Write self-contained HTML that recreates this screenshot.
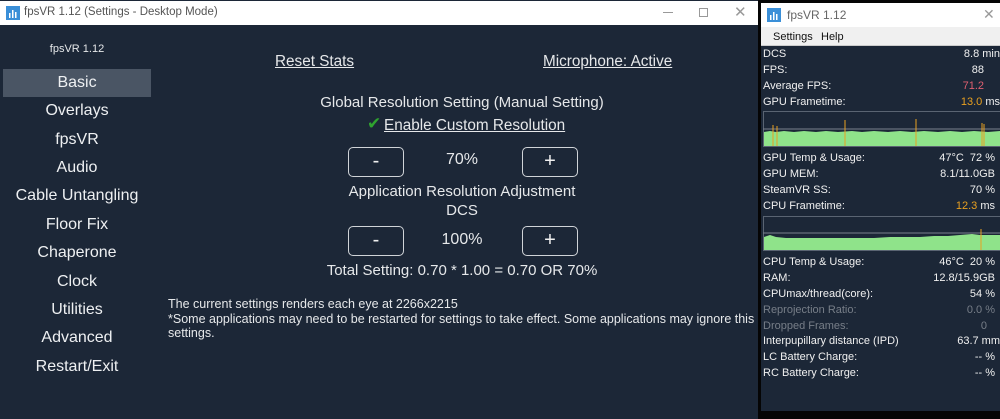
<!DOCTYPE html>
<html><head><meta charset="utf-8"><style>
*{margin:0;padding:0;box-sizing:border-box}
body{width:1000px;height:419px;background:#050505;position:relative;overflow:hidden;font-family:"Liberation Sans",sans-serif;color:#e6e8ea}
.a{position:absolute;white-space:nowrap}
#L{position:absolute;left:0;top:0;width:758px;height:419px;background:#1c2737}
#Lt{position:absolute;left:0;top:1px;width:758px;height:24px;background:#fff;color:#555;font-size:11.5px}
.nav{position:absolute;left:3px;width:148px;text-align:center;font-size:16px;color:#eef0f2}
.btn{position:absolute;width:56px;height:30px;border:1.5px solid #d0d4d8;border-radius:5px;text-align:center;font-size:20px;line-height:26px;color:#f0f0f0}
#R{position:absolute;left:761px;top:3px;width:239px;height:408px;background:#1c2737}
#Rt{position:absolute;left:0;top:0;width:239px;height:24px;background:#fff;color:#666;font-size:12px}
#Rm{position:absolute;left:0;top:24px;width:239px;height:19px;background:#f0f0f0;color:#111;font-size:11px;border-bottom:1px solid #ccc}
.r{position:absolute;left:2px;width:237px;font-size:11px;height:16px;color:#f0f0f0}
.r span{position:absolute;right:0;top:0}
.g{color:#777e88!important}
.o{color:#e8a020}
</style></head><body>
<div id="L">
 <div id="Lt">
  <svg class="a" style="left:6px;top:5px" width="14" height="14"><rect width="14" height="14" fill="#3a8fd8"/><rect x="3" y="7" width="1.5" height="5" fill="#fff"/><rect x="6" y="4" width="1.5" height="8" fill="#fff"/><rect x="9" y="6" width="1.5" height="6" fill="#fff"/></svg>
  <div class="a" style="left:24px;top:5px">fpsVR 1.12 (Settings - Desktop Mode)</div>
  <div class="a" style="left:663px;top:11px;width:10px;height:1px;background:#999"></div>
  <div class="a" style="left:699px;top:7px;width:9px;height:9px;border:1px solid #999"></div>
  <div class="a" style="left:734px;top:2px;font-size:15px;color:#999">✕</div>
 </div>
 <div class="a" style="left:3px;top:43px;width:148px;text-align:center;font-size:11px">fpsVR 1.12</div>
 <div class="a" style="left:3px;top:69px;width:148px;height:28px;background:#4a5564"></div>
 <div class="nav" style="top:74px">Basic</div>
 <div class="nav" style="top:102px">Overlays</div>
 <div class="nav" style="top:131px">fpsVR</div>
 <div class="nav" style="top:159px">Audio</div>
 <div class="nav" style="top:187px">Cable Untangling</div>
 <div class="nav" style="top:216px">Floor Fix</div>
 <div class="nav" style="top:244px">Chaperone</div>
 <div class="nav" style="top:273px">Clock</div>
 <div class="nav" style="top:301px">Utilities</div>
 <div class="nav" style="top:329px">Advanced</div>
 <div class="nav" style="top:358px">Restart/Exit</div>
 <div class="a" style="left:275px;top:53px;font-size:15.3px;text-decoration:underline">Reset Stats</div>
 <div class="a" style="left:543px;top:53px;font-size:15.3px;text-decoration:underline">Microphone: Active</div>
 <div class="a" style="left:200px;width:524px;text-align:center;top:94px;font-size:15px">Global Resolution Setting (Manual Setting)</div>
 <div class="a" style="left:367px;top:114px;font-size:17px;color:#2fa32f">✔</div>
 <div class="a" style="left:384px;top:117px;font-size:15.3px;text-decoration:underline">Enable Custom Resolution</div>
 <div class="btn" style="left:348px;top:147px">-</div>
 <div class="a" style="left:430px;width:64px;text-align:center;top:151px;font-size:16px">70%</div>
 <div class="btn" style="left:522px;top:147px">+</div>
 <div class="a" style="left:200px;width:524px;text-align:center;top:183px;font-size:15px">Application Resolution Adjustment</div>
 <div class="a" style="left:200px;width:524px;text-align:center;top:202px;font-size:15px">DCS</div>
 <div class="btn" style="left:348px;top:226px">-</div>
 <div class="a" style="left:430px;width:64px;text-align:center;top:231px;font-size:16px">100%</div>
 <div class="btn" style="left:522px;top:226px">+</div>
 <div class="a" style="left:200px;width:524px;text-align:center;top:262px;font-size:15px">Total Setting: 0.70 * 1.00 = 0.70 OR 70%</div>
 <div class="a" style="left:168px;top:297px;font-size:12.5px;line-height:14.5px">The current settings renders each eye at 2266x2215<br>*Some applications may need to be restarted for settings to take effect. Some applications may ignore this<br>settings.</div>
</div>
<div id="R">
 <div id="Rt">
  <svg class="a" style="left:6px;top:5px" width="14" height="14"><rect width="14" height="14" fill="#3a8fd8"/><rect x="3" y="7" width="1.5" height="5" fill="#fff"/><rect x="6" y="4" width="1.5" height="8" fill="#fff"/><rect x="9" y="6" width="1.5" height="6" fill="#fff"/></svg>
  <div class="a" style="left:26px;top:5px">fpsVR 1.12</div>
  <div class="a" style="left:222px;top:3px;font-size:14px;color:#999">✕</div>
 </div>
 <div id="Rm"><div class="a" style="left:12px;top:4px">Settings</div><div class="a" style="left:60px;top:4px">Help</div></div>
 <div class="r" style="top:45px">DCS<span>8.8 min</span></div>
 <div class="r" style="top:61px">FPS:<span style="right:16px">88</span></div>
 <div class="r" style="top:77px">Average FPS:<span style="right:16px;color:#e06070">71.2</span></div>
 <div class="r" style="top:93px">GPU Frametime:<span><b class="o" style="font-weight:normal">13.0</b> ms</span></div>
 <svg class="a" style="left:2px;top:108px" width="237" height="36">
  <rect x="0.5" y="0.5" width="240" height="35" fill="#1c2737" stroke="#5a6472"/>
  <line x1="0" y1="18" x2="237" y2="18" stroke="#7a828c"/>
  <path d="M1 35V21l6-1 6 1 8-1 10 1 10-1 12 1 10-1 12 1 14-1 10 1 12-1 14 1 12-1 12 1 12-1 14 1 12-1 12 1 12-1 14 1 12-1 12 1 V35Z" fill="#8fe38a"/>
  <g stroke="#e8a020" stroke-width="1"><line x1="10" y1="14" x2="10" y2="35"/><line x1="14" y1="15" x2="14" y2="35"/><line x1="82" y1="9" x2="82" y2="35"/><line x1="153" y1="8" x2="153" y2="35"/><line x1="219" y1="12" x2="219" y2="35"/><line x1="221" y1="13" x2="221" y2="35"/></g>
 </svg>
 <div class="r" style="top:149px">GPU Temp &amp; Usage:<span style="right:5px">47°C&nbsp;&nbsp;72 %</span></div>
 <div class="r" style="top:165px">GPU MEM:<span style="right:5px">8.1/11.0GB</span></div>
 <div class="r" style="top:181px">SteamVR SS:<span style="right:5px">70 %</span></div>
 <div class="r" style="top:197px">CPU Frametime:<span style="right:5px"><b class="o" style="font-weight:normal">12.3</b> ms</span></div>
 <svg class="a" style="left:2px;top:213px" width="237" height="35">
  <rect x="0.5" y="0.5" width="240" height="34" fill="#1c2737" stroke="#5a6472"/>
  <line x1="0" y1="17" x2="237" y2="17" stroke="#7a828c"/>
  <path d="M1 34V21l6-2 6 2 10 1 12 0 14 0 14 0 16 0 16 0 16 0 16-1 16 0 14 0 14-1 14 0 12-1 12-1 8 1 12 0 12 0V34Z" fill="#8fe38a"/>
  <line x1="218" y1="13" x2="218" y2="34" stroke="#e8a020"/>
 </svg>
 <div class="r" style="top:253px">CPU Temp &amp; Usage:<span style="right:5px">46°C&nbsp;&nbsp;20 %</span></div>
 <div class="r" style="top:269px">RAM:<span style="right:5px">12.8/15.9GB</span></div>
 <div class="r" style="top:285px">CPUmax/thread(core):<span style="right:5px">54 %</span></div>
 <div class="r g" style="top:301px">Reprojection Ratio:<span style="right:5px" class="g">0.0 %</span></div>
 <div class="r g" style="top:317px">Dropped Frames:<span style="right:13px" class="g">0</span></div>
 <div class="r" style="top:332px">Interpupillary distance (IPD)<span>63.7 mm</span></div>
 <div class="r" style="top:348px">LC Battery Charge:<span style="right:5px">-- %</span></div>
 <div class="r" style="top:364px">RC Battery Charge:<span style="right:5px">-- %</span></div>
</div>
</body></html>
